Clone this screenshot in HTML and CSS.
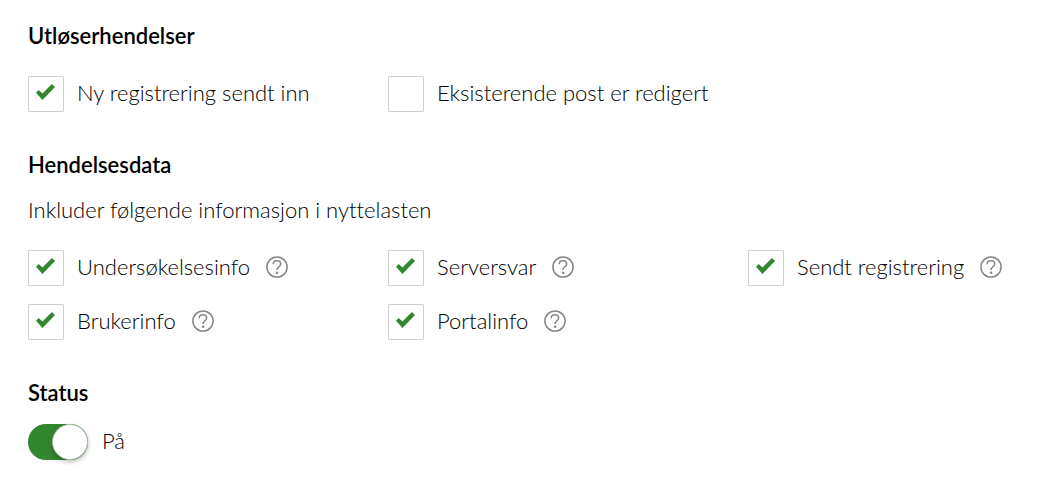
FILE: index.html
```html
<!DOCTYPE html>
<html lang="nb">
<head>
<meta charset="utf-8">
<title>Webhook</title>
<link rel="stylesheet" href="styles.css">
</head>
<body>
<svg class="symbols" aria-hidden="true">
  <symbol id="help" viewBox="0 0 22 22">
    <circle cx="11" cy="11" r="10.1"/>
    <path d="M7.2 8.2C7.2 6.1 8.8 4.7 11 4.7s3.7 1.3 3.7 3.2c0 1.5-.9 2.2-2 3-.9.7-1.6 1.2-1.6 2.4v.7"/>
    <circle class="dot" cx="11.1" cy="16.8" r="1.3"/>
  </symbol>
</svg>
<form class="settings">
  <fieldset class="group">
    <legend class="title">Utløserhendelser</legend>
    <div class="options">
      <div class="option"><label class="choice"><input class="box" type="checkbox" checked><span class="text">Ny registrering sendt inn</span></label></div>
      <div class="option"><label class="choice"><input class="box" type="checkbox"><span class="text">Eksisterende post er redigert</span></label></div>
    </div>
  </fieldset>
  <fieldset class="group">
    <legend class="title">Hendelsesdata</legend>
    <p class="hint">Inkluder følgende informasjon i nyttelasten</p>
    <div class="options">
      <div class="option"><label class="choice"><input class="box" type="checkbox" checked><span class="text">Undersøkelsesinfo</span></label><button class="help" type="button" aria-label="Hjelp"><svg class="icon"><use href="#help"/></svg></button></div>
      <div class="option"><label class="choice"><input class="box" type="checkbox" checked><span class="text">Serversvar</span></label><button class="help" type="button" aria-label="Hjelp"><svg class="icon"><use href="#help"/></svg></button></div>
      <div class="option"><label class="choice"><input class="box" type="checkbox" checked><span class="text">Sendt registrering</span></label><button class="help" type="button" aria-label="Hjelp"><svg class="icon"><use href="#help"/></svg></button></div>
      <div class="option"><label class="choice"><input class="box" type="checkbox" checked><span class="text">Brukerinfo</span></label><button class="help" type="button" aria-label="Hjelp"><svg class="icon"><use href="#help"/></svg></button></div>
      <div class="option"><label class="choice"><input class="box" type="checkbox" checked><span class="text">Portalinfo</span></label><button class="help" type="button" aria-label="Hjelp"><svg class="icon"><use href="#help"/></svg></button></div>
    </div>
  </fieldset>
  <fieldset class="group status">
    <legend class="title">Status</legend>
    <label class="choice"><input class="switch" type="checkbox" role="switch" checked><span class="text">På</span></label>
  </fieldset>
</form>
</body>
</html>
```
FILE: styles.css
```css
*, *::before { box-sizing: border-box; }
body {
  margin: 0;
  background: #fff;
  color: #000;
  font: 300 22px/30px Lato, "Open Sans", sans-serif;
  font-variant-ligatures: none;
}
.symbols { position: absolute; width: 0; height: 0; }
.settings { display: flex; flex-direction: column; gap: 38px; padding: 21px 28px; }
.group { min-width: 0; margin: 0; padding: 0; border: 0; }
.title { padding: 0; margin-bottom: 25px; font-weight: 600; }
.status .title { margin-bottom: 16px; }
.hint { margin: -10px 0 25px; }
.options { display: grid; grid-template-columns: 360px 360px 1fr; gap: 18px 0; }
.option { display: flex; align-items: center; gap: 16px; }
.choice { display: flex; align-items: center; gap: 13px; white-space: nowrap; }
.text { padding-bottom: 2px; }
.box {
  appearance: none;
  flex: none;
  display: grid;
  place-items: center;
  width: 36px;
  height: 36px;
  margin: 0;
  padding: 0 1px 4px 0;
  border: 1px solid #d0d0d0;
  border-radius: 1px;
  background: #fff;
}
.box:checked::before {
  content: "";
  width: 19px;
  height: 16px;
  background: #31872e;
  clip-path: polygon(0 54%, 14% 37%, 34% 60%, 84% 0, 100% 18%, 34% 100%);
}
.help { display: flex; padding: 0 0 2px; border: 0; background: none; color: #858585; }
.icon { width: 22px; height: 22px; fill: none; stroke: currentColor; stroke-width: 1.5; }
.dot { fill: currentColor; stroke: none; }
.switch {
  appearance: none;
  flex: none;
  display: flex;
  width: 60px;
  height: 36px;
  margin: 0 1px 0 0;
  border-radius: 18px;
  background: #ccc;
}
.switch::before {
  content: "";
  width: 36px;
  height: 36px;
  border: 1px solid #adc0ad;
  border-radius: 50%;
  background: #fff;
  box-shadow: 0 2px 4px #0004;
}
.switch:checked { justify-content: flex-end; background: #31872e; }

@media (max-width: 1020px) {
  .options { grid-template-columns: repeat(auto-fill, minmax(min(100%, 330px), 1fr)); }
}
```
